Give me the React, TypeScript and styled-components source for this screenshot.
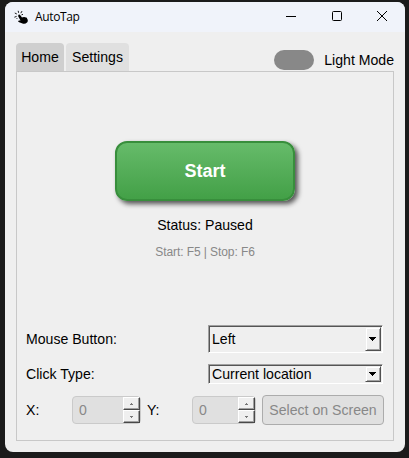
import React from "react";
import styled, { createGlobalStyle } from "styled-components";

const GlobalStyle = createGlobalStyle`
  * { box-sizing: border-box; }
  body {
    margin: 0;
    background: #1b1b1b;
    font-family: "Liberation Sans", Arial, sans-serif;
    font-size: 14.1px;
    color: #000;
  }
  button { font-family: inherit; }
`;

const Desktop = styled.div`
  width: 409px;
  height: 458px;
  padding: 2px 4px 6px 5px;
  background: #1b1b1b;
`;

const Window = styled.main`
  width: 400px;
  height: 450px;
  overflow: hidden;
  border-radius: 8px;
  background: #efefef;
`;

const TitleBar = styled.header`
  display: flex;
  align-items: center;
  height: 30px;
  padding-left: 9px;
  background: #f0f3fa;
`;

const Title = styled.h1`
  flex: 1;
  margin: 0 0 0 6px;
  font: 400 12px/16px "Open Sans", "Noto Sans", sans-serif;
  letter-spacing: -0.35px;
`;

const WindowControl = styled.button`
  display: grid;
  place-items: center;
  width: 45.5px;
  height: 30px;
  padding: 0 0 2px;
  border: 0;
  background: none;
`;

const Content = styled.div`
  padding: 11px 11px 0;
`;

const TopRow = styled.div`
  display: flex;
  height: 28px;
`;

const Tab = styled.button<{ $active?: boolean; $width: number }>`
  width: ${(p) => p.$width}px;
  height: 28px;
  margin-right: 2px;
  padding: 0;
  border: 0;
  border-radius: 4px 4px 0 0;
  background: ${(p) => (p.$active ? "#cfcfcf" : "#e0e0e0")};
  color: #000;
  font-size: 14.1px;
`;

const ModeSwitch = styled.div`
  display: flex;
  align-items: center;
  gap: 10px;
  height: 20px;
  margin: 7px 0 0 auto;
  white-space: nowrap;
`;

const SwitchTrack = styled.span`
  width: 40px;
  height: 20px;
  border-radius: 10px;
  background: #888;
`;

const Pane = styled.section`
  display: flex;
  flex-direction: column;
  height: 370px;
  padding: 69px 9px 0;
  border: 1px solid #c8c8c8;
`;

const StartButton = styled.button`
  align-self: center;
  width: 180px;
  height: 60px;
  padding-top: 2px;
  border: 2px solid #388e3c;
  border-radius: 12px;
  background: linear-gradient(#66bb6a, #43a047);
  box-shadow: 3px 3px 5px rgba(0, 0, 0, 0.65);
  color: #fff;
  font-size: 18px;
  font-weight: 700;
`;

const Status = styled.p`
  margin: 15px 0 0;
  line-height: 18px;
  text-align: center;
`;

const Hint = styled.p`
  margin: 10px 0 65px;
  color: #888;
  font-size: 12px;
  letter-spacing: -0.08px;
  line-height: 16px;
  text-align: center;
`;

const FieldRow = styled.div<{ $height: number; $gap: number }>`
  display: flex;
  align-items: center;
  justify-content: space-between;
  width: 357px;
  height: ${(p) => p.$height}px;
  margin-bottom: ${(p) => p.$gap}px;
`;

const Combo = styled.div`
  display: flex;
  align-items: center;
  justify-content: space-between;
  width: 175px;
  height: 100%;
  padding-left: 3px;
  border: 1px solid;
  border-color: #a0a0a0 #fff #fff #a0a0a0;
  box-shadow: inset 1px 1px #555, inset -1px -1px #efefef;
`;

const DropButton = styled.span`
  display: grid;
  place-items: center;
  align-self: stretch;
  width: 16px;
  margin: 1px;
  border: 1px solid;
  border-color: #efefef #505050 #505050 #efefef;
  box-shadow: inset 1px 1px #fff, inset -1px -1px #a0a0a0;
`;

const CoordinateRow = styled.div`
  display: grid;
  grid-template-columns: 46px 69px 51px 64px 128px;
  align-items: center;
  height: 30px;
`;

const YLabel = styled.span`
  padding-left: 6px;
`;

const Spin = styled.div`
  display: flex;
  align-items: stretch;
  justify-content: space-between;
  height: 28px;
  padding-left: 6px;
  border: 1px solid #cacaca;
  border-radius: 4px;
  background: #e0e0e0;
  color: #888;
  line-height: 26px;
`;

const SpinButtons = styled.span`
  display: grid;
  grid-template-rows: 13px 13px;
  width: 17px;
`;

const Step = styled.span`
  display: grid;
  place-items: center;
  border: 1px solid;
  border-color: #fff #484848 #484848 #fff;
  box-shadow: inset -1px -1px #a0a0a0;
  background: #efefef;
`;

const SelectButton = styled.button`
  height: 30px;
  margin-left: 6px;
  padding: 0;
  border: 1px solid #acacac;
  border-radius: 4px;
  background: #e0e0e0;
  color: #888;
  font-size: 14.1px;
  white-space: nowrap;
`;

const TapIcon = () => (
  <svg width="15" height="15" viewBox="0 0 15 15">
    <path
      d="M4.5 4.9c.7-.6 1.4-.2 1.8.4l1.7 2.1 1.2-.5.8.3.9-.2.8.5.8.1 1 1.6c.6 1.2.3 2.6-.5 3.4-1.2 1.2-3.1 1.5-4.5.8L4.6 12c-.8-.6-.3-1.7.6-1.6l1.3.1-2.2-3.9c-.3-.6-.3-1.2.2-1.7Z"
      fill="#000"
    />
    <path d="M4.2.8l.4 2M8 1.1 6.8 3.2M.8 3l2 1M.4 7.2l2.2-.8M7.5 4.8l1.5-.4M2.5 9l.7-.8" stroke="#000" strokeWidth=".9" />
  </svg>
);

const DropArrow = () => (
  <svg width="8" height="4" viewBox="0 0 8 4" shapeRendering="crispEdges">
    <path d="M0 0h7v1H6v1H5v1H4v1H3V3H2V2H1V1H0Z" fill="#000" />
  </svg>
);

const StepArrow = ({ up }: { up?: boolean }) => (
  <svg width="3" height="2" viewBox="0 0 3 2" shapeRendering="crispEdges">
    <path d={up ? "M1 0h1v1h1v1H0V1h1Z" : "M0 0h3v1H2v1H1V1H0Z"} fill="#777" />
  </svg>
);

const SpinBox = ({ value }: { value: number }) => (
  <Spin>
    {value}
    <SpinButtons>
      <Step><StepArrow up /></Step>
      <Step><StepArrow /></Step>
    </SpinButtons>
  </Spin>
);

const ComboBox = ({ value }: { value: string }) => (
  <Combo>
    {value}
    <DropButton><DropArrow /></DropButton>
  </Combo>
);

export default function App() {
  return (
    <Desktop>
      <GlobalStyle />
      <Window>
        <TitleBar>
          <TapIcon />
          <Title>AutoTap</Title>
          <WindowControl aria-label="Minimize">
            <svg width="10" height="10"><path d="M0 5.5h10" stroke="#000" /></svg>
          </WindowControl>
          <WindowControl aria-label="Maximize">
            <svg width="10" height="10"><rect x=".5" y=".5" width="9" height="9" rx="1" fill="none" stroke="#000" /></svg>
          </WindowControl>
          <WindowControl aria-label="Close">
            <svg width="10" height="10"><path d="m0 0 10 10M10 0 0 10" stroke="#000" /></svg>
          </WindowControl>
        </TitleBar>
        <Content>
          <TopRow>
            <Tab $active $width={48}>Home</Tab>
            <Tab $width={63}>Settings</Tab>
            <ModeSwitch><SwitchTrack />Light Mode</ModeSwitch>
          </TopRow>
          <Pane>
            <StartButton>Start</StartButton>
            <Status>Status: Paused</Status>
            <Hint>Start: F5 | Stop: F6</Hint>
            <FieldRow $height={28} $gap={11}>
              Mouse Button:
              <ComboBox value="Left" />
            </FieldRow>
            <FieldRow $height={20} $gap={11}>
              Click Type:
              <ComboBox value="Current location" />
            </FieldRow>
            <CoordinateRow>
              <span>X:</span>
              <SpinBox value={0} />
              <YLabel>Y:</YLabel>
              <SpinBox value={0} />
              <SelectButton>Select on Screen</SelectButton>
            </CoordinateRow>
          </Pane>
        </Content>
      </Window>
    </Desktop>
  );
}
